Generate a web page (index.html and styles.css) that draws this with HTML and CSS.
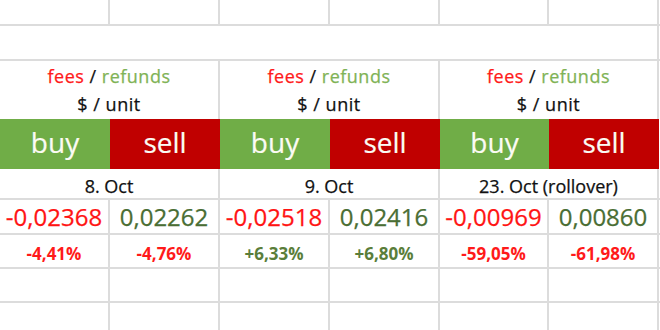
FILE: index.html
```html
<!DOCTYPE html>
<html>
<head>
<meta charset="utf-8">
<link rel="stylesheet" href="styles.css">
</head>
<body>
<div class="sheet">
  <div class="c"></div><div class="c"></div><div class="c"></div><div class="c"></div><div class="c"></div><div class="c"></div><div class="f"></div>

  <div class="c span6"></div><div class="f"></div>

  <div class="c span2 head"><div><span class="fee">fees</span> / <span class="ref">refunds</span></div><div>$ / unit</div></div>
  <div class="c span2 head"><div><span class="fee">fees</span> / <span class="ref">refunds</span></div><div>$ / unit</div></div>
  <div class="c span2 head"><div><span class="fee">fees</span> / <span class="ref">refunds</span></div><div>$ / unit</div></div>
  <div class="f nob"></div>

  <div class="btn buy">buy</div><div class="btn sell">sell</div>
  <div class="btn buy">buy</div><div class="btn sell">sell</div>
  <div class="btn buy">buy</div><div class="btn sell">sell</div>
  <div class="f nob"></div>

  <div class="c span2 date">8. Oct</div>
  <div class="c span2 date">9. Oct</div>
  <div class="c span2 date">23. Oct (rollover)</div>
  <div class="f"></div>

  <div class="c num neg">-0,02368</div>
  <div class="c num pos">0,02262</div>
  <div class="c num neg">-0,02518</div>
  <div class="c num pos">0,02416</div>
  <div class="c num neg">-0,00969</div>
  <div class="c num pos">0,00860</div>
  <div class="f"></div>

  <div class="c pct neg">-4,41%</div>
  <div class="c pct neg">-4,76%</div>
  <div class="c pct pos">+6,33%</div>
  <div class="c pct pos">+6,80%</div>
  <div class="c pct neg">-59,05%</div>
  <div class="c pct neg">-61,98%</div>
  <div class="f"></div>

  <div class="c"></div><div class="c"></div><div class="c"></div><div class="c"></div><div class="c"></div><div class="c"></div><div class="f"></div>

  <div class="c last"></div><div class="c last"></div><div class="c last"></div><div class="c last"></div><div class="c last"></div><div class="c last"></div><div class="f last"></div>
</div>
</body>
</html>
```

FILE: styles.css
```css
html, body {
  margin: 0;
  padding: 0;
  background: #ffffff;
}
body {
  width: 660px;
  height: 330px;
  overflow: hidden;
  font-family: "Open Sans", "Noto Sans", sans-serif;
  color: #111111;
}
.sheet {
  display: grid;
  grid-template-columns: 110px 110px 110px 110px 109px 110px 1fr;
  grid-template-rows: 26px 35px 58px 50px 31px 35px 34px 34px 40px;
}
.c {
  box-sizing: border-box;
  border-right: 2px solid #dcdcdc;
  border-bottom: 2px solid #dcdcdc;
  display: flex;
  justify-content: center;
  align-items: flex-end;
  white-space: nowrap;
  -webkit-text-stroke: 0.25px currentColor;
}
.f {
  box-sizing: border-box;
  border-bottom: 2px solid #dcdcdc;
}
.f.nob, .last {
  border-bottom: none;
}
.span6 {
  grid-column: span 6;
}
.span2 {
  grid-column: span 2;
}
.head {
  border-bottom: none;
  flex-direction: column;
  align-items: center;
  justify-content: flex-end;
  font-size: 18px;
  line-height: 28px;
  letter-spacing: 0.5px;
  padding-bottom: 1px;
  color: #111111;
}
.fee {
  color: #ff1a1a;
}
.ref {
  color: #7fb356;
}
.btn {
  display: flex;
  justify-content: center;
  align-items: flex-end;
  padding-bottom: 8px;
  box-sizing: border-box;
  font-size: 28px;
  color: #fbfbf4;
  -webkit-text-stroke: 0.2px currentColor;
}
.buy {
  background: #70ad47;
}
.sell {
  background: #c00000;
}
.date {
  font-size: 18px;
  padding-bottom: 0;
  box-sizing: border-box;
}
.num {
  font-size: 24px;
}
.pct {
  font-size: 17px;
  font-weight: 700;
  padding-bottom: 2px;
  -webkit-text-stroke: 0;
}
.num.neg {
  color: #ff1414;
}
.num.pos {
  color: #4a6e34;
}
.pct.neg {
  color: #ff1a1a;
}
.pct.pos {
  color: #5a7e3a;
}
```
